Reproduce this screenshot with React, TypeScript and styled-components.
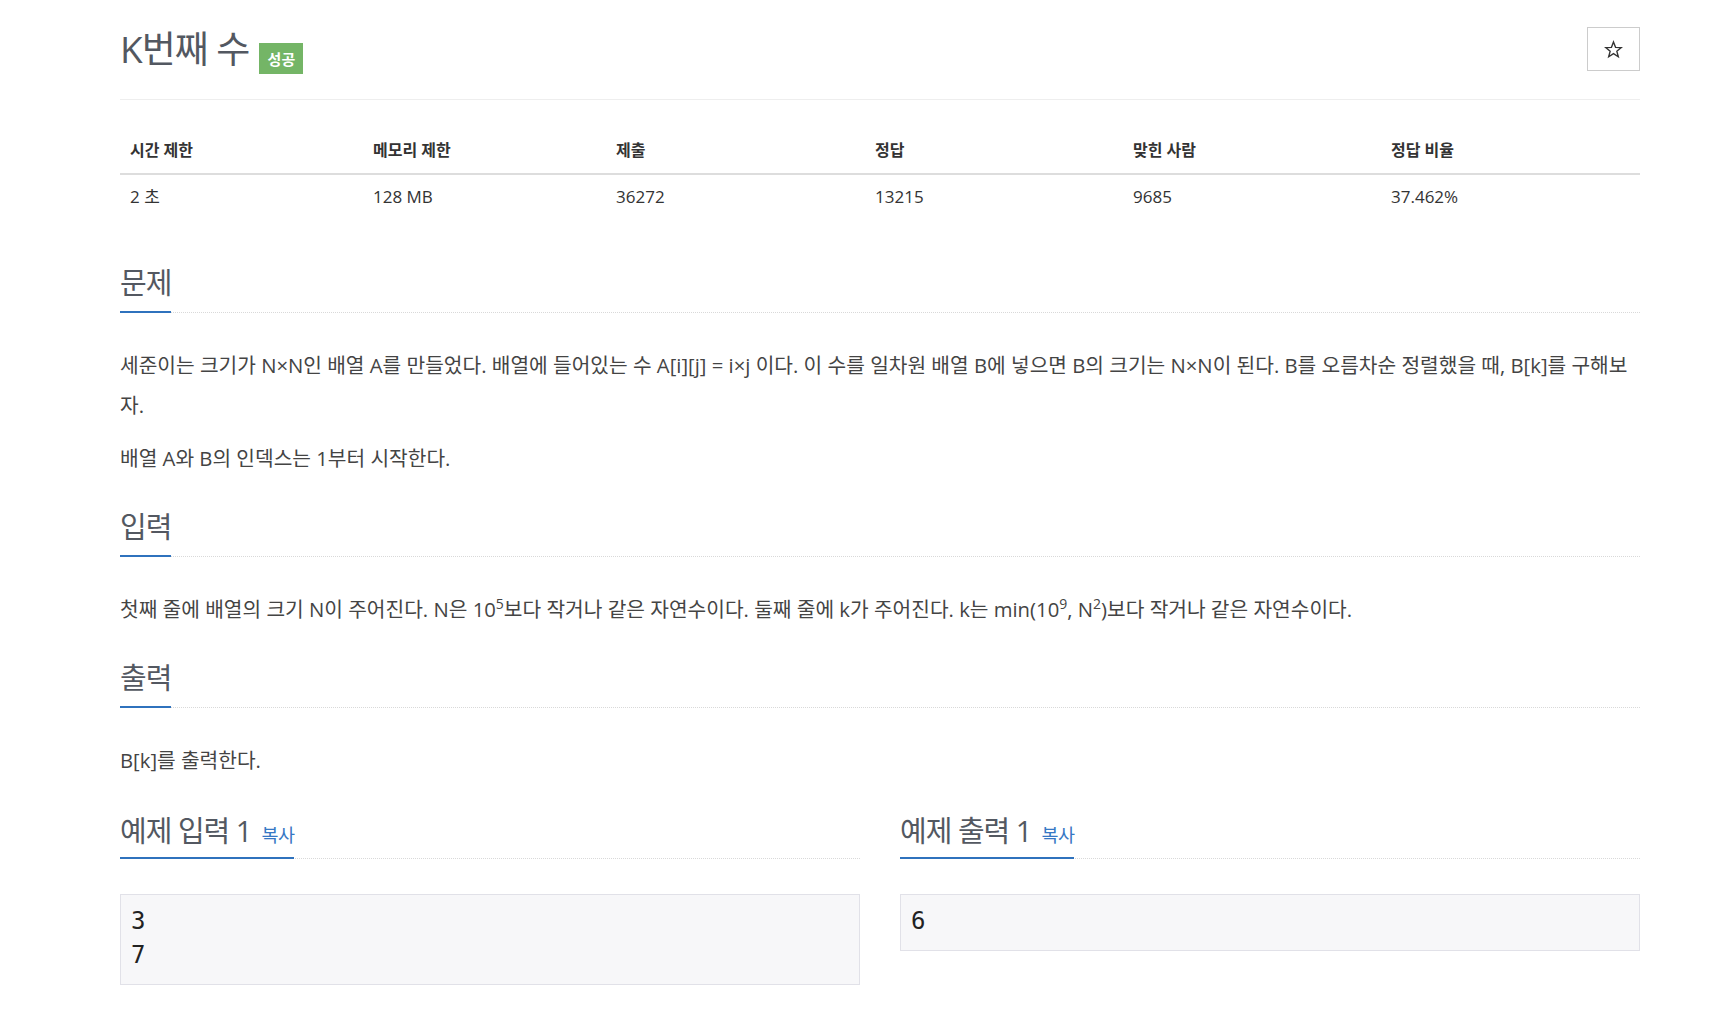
import React from "react";
import styled, { createGlobalStyle } from "styled-components";

const GlobalStyle = createGlobalStyle`
  html, body { margin: 0; padding: 0; background: #fff; }
  body {
    font-family: "Open Sans", "Noto Sans CJK KR", sans-serif;
    color: #333;
  }
  * { box-sizing: border-box; }
`;

const FONT = `"Open Sans", "Noto Sans CJK KR", sans-serif`;

const Page = styled.div`
  width: 1520px;
  margin-left: 120px;
  padding-top: 27px;
  padding-bottom: 40px;
`;

const Header = styled.header`
  display: flex;
  align-items: flex-start;
  justify-content: space-between;
  height: 44px;
  margin-bottom: 28px;
`;

const TitleWrap = styled.div`
  display: flex;
  align-items: flex-start;
  gap: 10px;
`;

const Title = styled.h1`
  margin: 0;
  font-family: ${FONT};
  font-weight: 400;
  font-size: 37px;
  line-height: 44px;
  letter-spacing: -1px;
  color: #535861;
`;

const Badge = styled.span`
  display: inline-flex;
  align-items: center;
  justify-content: center;
  width: 44px;
  height: 31px;
  margin-top: 16px;
  background: #74b566;
  color: #fff;
  font-family: ${FONT};
  font-size: 15px;
  font-weight: 700;
`;

const StarButton = styled.button`
  width: 53px;
  height: 44px;
  border: 1px solid #ccc;
  background: #fff;
  display: flex;
  align-items: center;
  justify-content: center;
  padding: 0;
  color: #333;
  cursor: pointer;
`;

const Rule = styled.hr`
  margin: 0;
  border: 0;
  border-top: 1px solid #eee;
`;

const InfoTable = styled.table`
  width: 100%;
  margin-top: 27px;
  border-collapse: collapse;
  table-layout: fixed;
  font-family: ${FONT};
`;

const Th = styled.th`
  text-align: left;
  padding: 12px 10px;
  line-height: 22px;
  font-size: 16px;
  font-weight: 700;
  color: #333;
  border-bottom: 2px solid #ddd;
`;

const Td = styled.td`
  padding: 11px 10px 10px 10px;
  line-height: 22px;
  font-size: 17px;
  color: #333;
`;

const Section = styled.section<{ $top?: number }>`
  margin-top: ${(p) => (p.$top ?? 31)}px;
`;

const Headline = styled.div`
  border-bottom: 1px dotted #d9d9d9;
`;

const H2 = styled.h2<{ $compact?: boolean }>`
  display: inline-block;
  margin: 0 0 -1px 0;
  padding-bottom: ${(p) => (p.$compact ? 8 : 10)}px;
  border-bottom: 2px solid #2f72bd;
  font-family: ${FONT};
  font-weight: 400;
  font-size: 29px;
  line-height: 36px;
  letter-spacing: -1px;
  color: #535861;
`;

const CopyLink = styled.a`
  font-size: 18.5px;
  line-height: 1;
  letter-spacing: -0.5px;
  color: #3677c4;
  text-decoration: none;
  margin-left: 10px;
`;

const Body = styled.div`
  margin-top: 32px;
`;

const P = styled.p`
  margin: 0 0 13px 0;
  font-family: ${FONT};
  font-size: 20.3px;
  line-height: 40px;
  color: #444;
  &:last-child { margin-bottom: 0; }
  sup { font-size: 14px; line-height: 0; }
`;

const SampleGrid = styled.div`
  display: grid;
  grid-template-columns: 1fr 1fr;
  column-gap: 40px;
  margin-top: 33px;
`;

const Pre = styled.pre`
  margin: 35px 0 0 0;
  padding: 9px 10px 12px 10px;
  background: #f7f7f9;
  border: 1px solid #e1e1e8;
  font-family: "DejaVu Sans Mono", "Liberation Mono", monospace;
  font-size: 24px;
  line-height: 34px;
  color: #222;
`;

const StarIcon = () => (
  <svg width="19" height="19" viewBox="0 0 24 24" fill="none" stroke="#333" strokeWidth="1.7" strokeLinejoin="miter">
    <polygon points="12,2.5 14.6,9.3 21.8,9.6 16.2,14.1 18.1,21.2 12,17.2 5.9,21.2 7.8,14.1 2.2,9.6 9.4,9.3" />
  </svg>
);

const columns = [243, 243, 259, 258, 258, 259];
const headers = ["시간 제한", "메모리 제한", "제출", "정답", "맞힌 사람", "정답 비율"];
const values = ["2 초", "128 MB", "36272", "13215", "9685", "37.462%"];

export default function App() {
  return (
    <>
      <GlobalStyle />
      <Page>
        <Header>
          <TitleWrap>
            <Title>K번째 수</Title>
            <Badge>성공</Badge>
          </TitleWrap>
          <StarButton aria-label="star">
            <StarIcon />
          </StarButton>
        </Header>
        <Rule />

        <InfoTable>
          <colgroup>
            {columns.map((w, i) => (
              <col key={i} style={{ width: w }} />
            ))}
          </colgroup>
          <thead>
            <tr>
              {headers.map((h) => (
                <Th key={h}>{h}</Th>
              ))}
            </tr>
          </thead>
          <tbody>
            <tr>
              {values.map((v) => (
                <Td key={v}>{v}</Td>
              ))}
            </tr>
          </tbody>
        </InfoTable>

        <Section $top={47}>
          <Headline>
            <H2>문제</H2>
          </Headline>
          <Body>
            <P>
              세준이는 크기가 N×N인 배열 A를 만들었다. 배열에 들어있는 수 A[i][j] = i×j 이다. 이 수를 일차원 배열 B에 넣으면 B의 크기는 N×N이 된다. B를 오름차순 정렬했을 때, B[k]를 구해보자.
            </P>
            <P>배열 A와 B의 인덱스는 1부터 시작한다.</P>
          </Body>
        </Section>

        <Section>
          <Headline>
            <H2>입력</H2>
          </Headline>
          <Body>
            <P>
              첫째 줄에 배열의 크기 N이 주어진다. N은 10<sup>5</sup>보다 작거나 같은 자연수이다. 둘째 줄에 k가 주어진다. k는 min(10<sup>9</sup>, N<sup>2</sup>)보다 작거나 같은 자연수이다.
            </P>
          </Body>
        </Section>

        <Section>
          <Headline>
            <H2>출력</H2>
          </Headline>
          <Body>
            <P>B[k]를 출력한다.</P>
          </Body>
        </Section>

        <SampleGrid>
          <div>
            <Headline>
              <H2 $compact>
                예제 입력 1<CopyLink href="#">복사</CopyLink>
              </H2>
            </Headline>
            <Pre>{"3\n7"}</Pre>
          </div>
          <div>
            <Headline>
              <H2 $compact>
                예제 출력 1<CopyLink href="#">복사</CopyLink>
              </H2>
            </Headline>
            <Pre>{"6"}</Pre>
          </div>
        </SampleGrid>
      </Page>
    </>
  );
}
